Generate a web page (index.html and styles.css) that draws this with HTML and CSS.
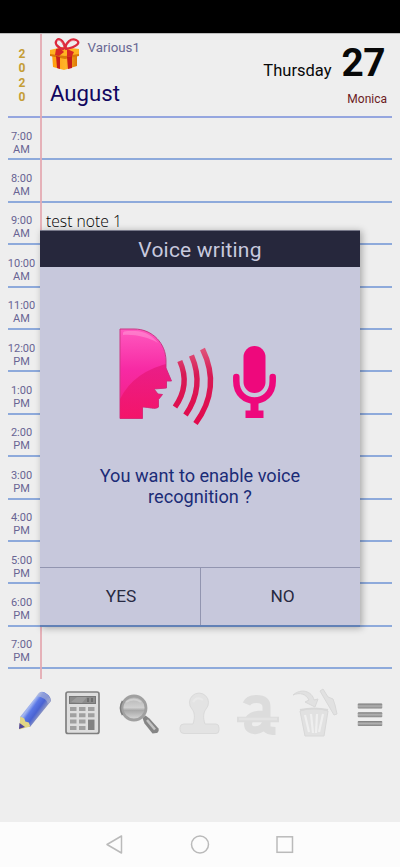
FILE: index.html
```html
<!DOCTYPE html>
<html lang="en">
<head>
<meta charset="utf-8">
<title>Planner</title>
<link rel="stylesheet" href="styles.css">
</head>
<body>
<div class="status"></div>
<main class="page">
  <header class="head">
    <div class="year"><span>2</span><span>0</span><span>2</span><span>0</span></div>
    <div class="head-left">
      <div class="tag">
        <svg class="gift" width="32" height="34" viewBox="0 0 32 34">
          <defs><linearGradient id="box" x2="1"><stop offset="0" stop-color="#ff9d0c"/><stop offset=".55" stop-color="#ffb52a"/><stop offset="1" stop-color="#dd7905"/></linearGradient></defs>
          <path d="M3 15l10 3 15-2v12l-13 4-11-3z" fill="url(#box)"/>
          <path d="M1 12l13-3 16 2v6l-14 2-15-2z" fill="#ffb321"/>
          <path d="M1 16l15 2 14-2v2l-14 3L1 18z" fill="#d9780a"/>
          <path d="M7 18l4 1v12l-3-1zM18 19l5-1v12l-4 1z" fill="#c81d1b"/>
          <path d="M7 11l4-1 4 4-5 4-4-1zM18 11l7 3-2 4-5 1z" fill="#d82724"/>
          <path d="M15 11C8 10 5 5 8 2s8 3 8 9C17 4 22 0 27 2s2 7-11 9" fill="none" stroke="#dc293d" stroke-width="2.3"/>
          <path d="M8 3c2-2 5 0 6 4M19 6c2-3 5-4 7-3" fill="none" stroke="#f47b88" stroke-width=".8"/>
        </svg>
        <span class="tag-name">Various1</span>
      </div>
      <div class="month">August</div>
    </div>
    <div class="head-right">
      <div class="date"><span class="weekday">Thursday</span><span class="day">27</span></div>
      <div class="saint">Monica</div>
    </div>
  </header>
  <section class="hours">
    <div class="row"><div class="time">7:00<br>AM</div></div>
    <div class="row"><div class="time">8:00<br>AM</div></div>
    <div class="row"><div class="time">9:00<br>AM</div><div class="note">test note 1</div></div>
    <div class="row"><div class="time">10:00<br>AM</div></div>
    <div class="row"><div class="time">11:00<br>AM</div></div>
    <div class="row"><div class="time">12:00<br>PM</div></div>
    <div class="row"><div class="time">1:00<br>PM</div></div>
    <div class="row"><div class="time">2:00<br>PM</div></div>
    <div class="row"><div class="time">3:00<br>PM</div></div>
    <div class="row"><div class="time">4:00<br>PM</div></div>
    <div class="row"><div class="time">5:00<br>PM</div></div>
    <div class="row"><div class="time">6:00<br>PM</div></div>
    <div class="row"><div class="time">7:00<br>PM</div></div>
  </section>
  <div class="margin-line"></div>
  <div class="tools">
    <svg width="400" height="60" viewBox="0 684 400 60">
      <defs>
        <linearGradient id="pen" gradientUnits="userSpaceOnUse" x1="27" y1="703" x2="41" y2="713"><stop offset="0" stop-color="#8fa0dc"/><stop offset=".25" stop-color="#a3b6f0"/><stop offset=".45" stop-color="#5a77e6"/><stop offset=".75" stop-color="#4a63d2"/><stop offset="1" stop-color="#8590c4"/></linearGradient>
        <linearGradient id="glass" x2="0" y2="1"><stop offset="0" stop-color="#b3b3b3"/><stop offset=".48" stop-color="#d0d0d0"/><stop offset=".6" stop-color="#a8a8a8"/><stop offset="1" stop-color="#dadada"/></linearGradient>
        <linearGradient id="bar" x2="0" y2="1"><stop offset="0" stop-color="#777"/><stop offset=".5" stop-color="#b2b2b2"/><stop offset="1" stop-color="#858585"/></linearGradient>
      </defs>
      <g>
        <path d="M20 717L39 693q3-3 8 1 4 3 4 7L30 727l-6-1z" fill="url(#pen)"/>
        <path d="M38.500 693.500q3-3 8 .5 4 3 4 7l-2.500 3q-1-6-11.500-8z" fill="#b3b9d4" opacity=".6"/>
        <path d="M20.300 716.500l4 2 1 3 3.500 1 1.500 4-11 3z" fill="#e2d684"/>
        <path d="M19.500 723l5.500 4-6 2z" fill="#514599"/>
      </g>
      <g>
        <rect x="66" y="692" width="33" height="41.500" rx="2" fill="#dedede" stroke="#808080" stroke-width="1.700"/>
        <rect x="69.500" y="696.500" width="26" height="7" fill="#8c8c8c" stroke="#777"/>
        <path d="M71 702l6-5h10l-5 6z" fill="#9c9c9c"/><path d="M88 698v4M92 698v4" stroke="#666" stroke-width="1.500"/>
        <g fill="#a0a0a0"><path d="M70 707h6.500v4H70zM79 707h6.500v4H79zM88 707h6.500v4H88zM70 713.300h6.500v4H70zM79 713.300h6.500v4H79zM88 713.300h6.500v4H88zM70 719.600h6.500v4H70zM79 719.600h6.500v4H79zM70 726h6.500v4H70zM79 726h6.500v4H79z"/><path d="M88 719.600h6.500V730H88z" fill="#828282"/></g>
      </g>
      <g>
        <path d="M142.500 718l3-2.500 4 3 9 10q1 3-2 4.500l-4 .5-8-10z" fill="#858585"/>
        <path d="M147 720l8 9.500" stroke="#c4c4c4" stroke-width="2.500"/>
        <circle cx="134" cy="708" r="12" fill="url(#glass)" stroke="#a0a0a0" stroke-width="2.800"/>
        <path d="M122.500 715a13.600 13.600 0 0 1 0-14" fill="none" stroke="#7d7d7d" stroke-width="1.500"/>
        <path d="M126 702q8-5 15 0" stroke="#ddd" stroke-width="2" fill="none" opacity=".6"/>
      </g>
      <g fill="#e3e3e3" stroke="#dadada" stroke-width="1">
        <path d="M193 724c2-6 2-11-1-15a9.500 9.500 0 1 1 14 0c-3 4-3 9-1 15h11q3 0 3 4v2q0 3.500-3 3.500h-32q-4 0-4-4v-2q0-3.500 4-3.500z"/>
        <path d="M193 702q4-6 10-2" fill="none" stroke="#e9e9e9" stroke-width="2"/>
      </g>
      <g fill="none" stroke="#dcdcdc">
        <path d="M246.500 704q2-5 10-5 10 0 10 8v20q0 4 9 4M266 714.500q-18-1-18 9.500c0 9 14 8 18-1" stroke-width="8"/>
        <path d="M237 719.500h42" stroke-width="5.500"/>
        <path d="M239 719h38" stroke="#e3e3e3" stroke-width="2.500"/>
      </g>
      <g fill="#e1e1e1" stroke="#d8d8d8" stroke-width="1">
        <path d="M293 695c8-7 19-4 21 5l4-1-3 8-10-5 4-2c-3-6-9-8-16-5z"/>
        <path d="M320 691l3-2 5 8 5 2 2 6 2 9-3 1z"/>
        <path d="M300 711q14-5 28 0l-4 25h-19z"/>
        <path d="M305 715l4 17M311 714l2 19M317 714l-1 19M323 714l-4 18" stroke="#efefef" stroke-width="2.200" fill="none"/>
        <path d="M300 710q14-3 28 0" fill="none" stroke-width="2"/>
      </g>
      <g fill="url(#bar)">
        <rect x="357.700" y="703.500" width="24.600" height="5" rx="1"/><rect x="357.700" y="712.200" width="24.600" height="5" rx="1"/><rect x="357.700" y="720.900" width="24.600" height="5" rx="1"/>
      </g>
    </svg>
  </div>
  <div class="dialog">
    <div class="dialog-title">Voice writing</div>
    <div class="dialog-body">
      <svg class="voice" width="170" height="110" viewBox="110 320 170 110">
        <defs>
          <linearGradient id="face" x2="0" y2="1"><stop offset="0" stop-color="#ff59bf"/><stop offset=".45" stop-color="#f72aa4"/><stop offset="1" stop-color="#f21e80"/></linearGradient>
          <linearGradient id="wave" gradientUnits="userSpaceOnUse" x1="0" y1="350" x2="0" y2="420"><stop offset="0" stop-color="#df5279"/><stop offset=".35" stop-color="#d71b55"/><stop offset="1" stop-color="#e20b4e"/></linearGradient>
          <linearGradient id="jaw" x2="0" y2="1"><stop offset="0" stop-color="#e3187c"/><stop offset="1" stop-color="#f5105f"/></linearGradient>
          <clipPath id="headclip"><path d="M120 329H134C153 329 166 344 166 361V368L171.500 381H166.500V388L154 389L158 394L162.500 394.500L158.500 399.500V407C155 410 149 407 142.500 407V418.500H120Z"/></clipPath>
        </defs>
        <path d="M120 329H134C153 329 166 344 166 361V368L171.500 381H166.500V388L154 389L158 394L162.500 394.500L158.500 399.500V407C155 410 149 407 142.500 407V418.500H120Z" fill="url(#face)" stroke="#c83a85" stroke-width="1"/>
        <path clip-path="url(#headclip)" d="M120 399Q134 370 174 362V420H120z" fill="url(#jaw)" opacity=".7"/>
        <path d="M123 333q0-2 5-2h7c10 0 18 5 23 12-10-6-24-9-35-8z" fill="#fff" opacity=".22"/>
        <g fill="none" stroke="url(#wave)" stroke-width="5.400">
          <path d="M179.800 361Q190.500 385 175 407"/><path d="M191.500 355.500Q205 387 185.500 415"/><path d="M202.500 349Q221.500 388 195.500 423.500"/>
        </g>
        <g fill="#ee087c"><rect x="243.500" y="346" width="22" height="47" rx="11"/><path d="M245.500 410.500h18v7.500h-18z"/></g>
        <g fill="none" stroke="#ee087c"><path d="M236.300 377v4C236.300 407 272.700 407 272.700 381v-4" stroke-width="6.500" stroke-linecap="round"/><path d="M254.500 400v13" stroke-width="8"/></g>
      </svg>
      <p class="question">You want to enable voice<br>recognition ?</p>
    </div>
    <div class="actions"><div class="action">YES</div><div class="action">NO</div></div>
  </div>
</main>
<nav class="nav">
  <svg width="400" height="45" viewBox="0 822 400 45" fill="none" stroke="#bababa" stroke-width="1.500">
    <path d="M107 844.500L121.500 836V853z" stroke-linejoin="round"/>
    <circle cx="200" cy="844.500" r="8.500"/>
    <rect x="277" y="836.800" width="15.500" height="15.500"/>
  </svg>
</nav>
</body>
</html>
```

FILE: styles.css
```css
* { box-sizing: border-box; }
body {
  margin: 0;
  width: 400px;
  height: 867px;
  overflow: hidden;
  background: #eeeeee;
  font-family: Roboto, "Liberation Sans", sans-serif;
  display: flex;
  flex-direction: column;
}
svg { display: block; }
.status { height: 33px; background: #000; flex: none; }
.page { position: relative; height: 789px; flex: none; border-top: 1px solid #bbbbbb; }
.head {
  height: 84px;
  margin: 0 8px;
  border-bottom: 2px solid #95a6df;
  display: flex;
}
.year {
  width: 28px;
  padding-top: 12.500px;
  display: flex;
  flex-direction: column;
  align-items: center;
  color: #c59d35;
  font-weight: 700;
  font-size: 12px;
  line-height: 14.500px;
}
.head-left { flex: 1; padding: 4px 0 0 14px; }
.tag { display: flex; height: 41px; }
.gift { margin-left: -1px; }
.tag-name { color: #686893; font-size: 13.300px; line-height: 19px; margin-left: 6.500px; }
.month { color: #11065f; font-size: 22.200px; line-height: 28px; }
.head-right { padding: 7px 7px 0 0; text-align: right; }
.date { display: flex; align-items: baseline; justify-content: flex-end; gap: 10px; height: 44px; line-height: 44px; color: #080808; }
.weekday { font-size: 16.500px; }
.day { font-size: 38.800px; font-weight: 700; letter-spacing: -0.500px; }
.saint { font-size: 12px; line-height: 16px; margin: 6px -2px 0 0; color: #6b1b22; }
.hours { margin: 0 8px; }
.row {
  height: 42.420px;
  border-bottom: 2px solid #8eaadb;
  display: flex;
}
.time {
  width: 33px;
  margin-left: -3px;
  padding-top: 11.500px;
  text-align: center;
  color: #686493;
  font-size: 11px;
  line-height: 13px;
}
.note {
  margin-left: 8px;
  padding-top: 9px;
  font-family: "Open Sans", sans-serif;
  font-weight: 300;
  font-size: 15.700px;
  line-height: 18px;
  color: #000;
}
.margin-line { position: absolute; left: 40px; top: 0; width: 2px; height: 645px; background: #e3aab1; opacity: .9; }
.tools { margin-top: 14.500px; }
.dialog {
  position: absolute;
  left: 40px;
  top: 196px;
  width: 320px;
  height: 397px;
  background: #c7c8dc;
  border-top: 1px solid #77788a;
  border-bottom: 2px solid #6281b6;
  box-shadow: 2px 1px 7px rgba(0, 0, 0, .3);
  display: flex;
  flex-direction: column;
}
.dialog-title {
  height: 36px;
  background: #26273c;
  color: #c8c9de;
  font-size: 21px;
  line-height: 38px;
  text-align: center;
  letter-spacing: .200px;
}
.dialog-body { height: 300px; flex: none; padding-top: 53px; }
.voice { margin-left: 70px; }
.question {
  margin: 35px 0 0;
  text-align: center;
  color: #1b2c77;
  font-size: 18.150px;
  line-height: 21px;
}
.actions { flex: 1; display: flex; border-top: 1px solid #9295b0; }
.action { width: 160px; text-align: center; font-size: 17.300px; line-height: 57px; color: #272a42; padding-left: 2px; }
.action + .action { border-left: 1px solid #9295b0; padding-left: 4px; }
.nav { height: 45px; background: #fcfcfc; flex: none; }
```
